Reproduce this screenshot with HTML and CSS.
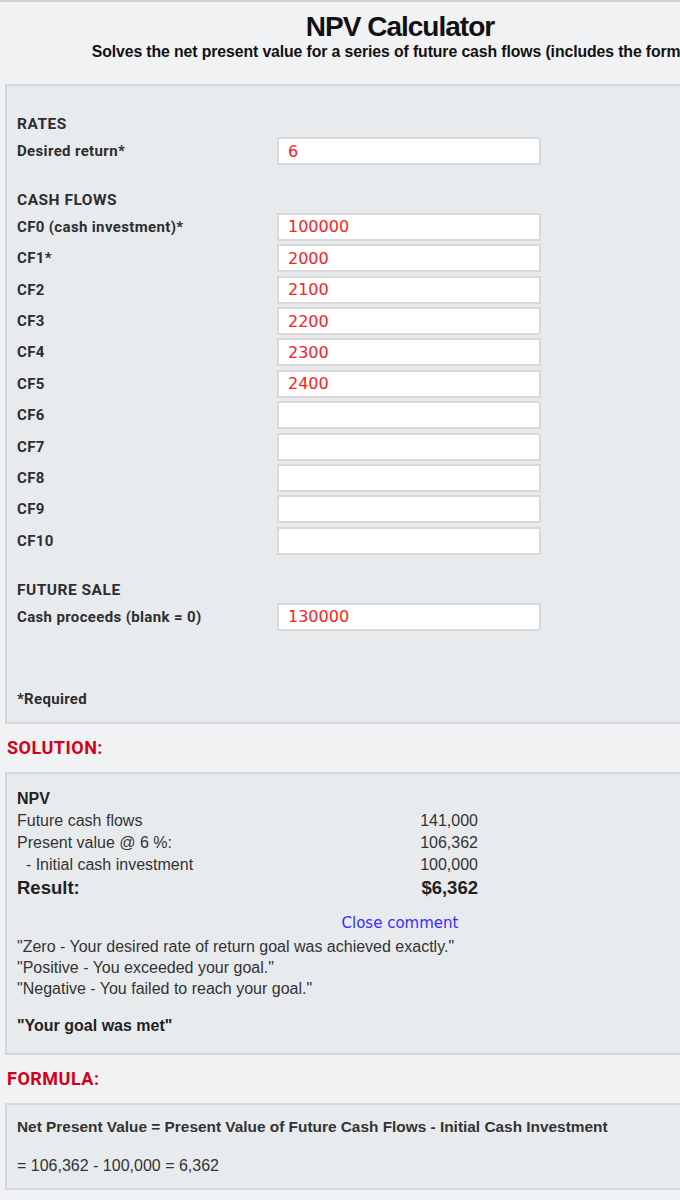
FILE: index.html
```html
<!DOCTYPE html>
<html lang="en">
<head>
<meta charset="utf-8">
<title>NPV Calculator</title>
<link rel="stylesheet" href="styles.css">
</head>
<body>
<div class="page">
  <header class="head">
    <h1 class="title">NPV Calculator</h1>
    <p class="subtitle">Solves the net present value for a series of future cash flows (includes the formula)</p>
  </header>

  <form class="panel inputs-panel">
    <h3 class="group">RATES</h3>
    <div class="row"><label class="lbl">Desired return*</label><input class="field" type="text" value="6"></div>

    <h3 class="group gap">CASH FLOWS</h3>
    <div class="row"><label class="lbl">CF0 (cash investment)*</label><input class="field" type="text" value="100000"></div>
    <div class="row"><label class="lbl">CF1*</label><input class="field" type="text" value="2000"></div>
    <div class="row"><label class="lbl">CF2</label><input class="field" type="text" value="2100"></div>
    <div class="row"><label class="lbl">CF3</label><input class="field" type="text" value="2200"></div>
    <div class="row"><label class="lbl">CF4</label><input class="field" type="text" value="2300"></div>
    <div class="row"><label class="lbl">CF5</label><input class="field" type="text" value="2400"></div>
    <div class="row"><label class="lbl">CF6</label><input class="field" type="text" value=""></div>
    <div class="row"><label class="lbl">CF7</label><input class="field" type="text" value=""></div>
    <div class="row"><label class="lbl">CF8</label><input class="field" type="text" value=""></div>
    <div class="row"><label class="lbl">CF9</label><input class="field" type="text" value=""></div>
    <div class="row"><label class="lbl">CF10</label><input class="field" type="text" value=""></div>

    <h3 class="group gap">FUTURE SALE</h3>
    <div class="row"><label class="lbl">Cash proceeds (blank = 0)</label><input class="field" type="text" value="130000"></div>

    <p class="required">*Required</p>
  </form>

  <h2 class="section">SOLUTION:</h2>
  <div class="panel result-panel">
    <div class="calc">
      <div class="c-head">NPV</div>
      <div class="c-lbl">Future cash flows</div><div class="c-val">141,000</div>
      <div class="c-lbl">Present value @ 6 %:</div><div class="c-val">106,362</div>
      <div class="c-lbl">&nbsp; - Initial cash investment</div><div class="c-val">100,000</div>
      <div class="c-lbl c-big">Result:</div><div class="c-val c-big">$6,362</div>
    </div>
    <div class="close"><a class="close-link" href="#">Close comment</a></div>
    <p class="quotes">"Zero - Your desired rate of return goal was achieved exactly."<br>"Positive - You exceeded your goal."<br>"Negative - You failed to reach your goal."</p>
    <p class="verdict">"Your goal was met"</p>
  </div>

  <h2 class="section">FORMULA:</h2>
  <div class="panel formula-panel">
    <p class="f-main">Net Present Value = Present Value of Future Cash Flows - Initial Cash Investment</p>
    <p class="f-calc">= 106,362 - 100,000 = 6,362</p>
  </div>
</div>
</body>
</html>
```

FILE: styles.css
```css
html, body {
  margin: 0;
  padding: 0;
}
body {
  background: #f1f2f4;
  border-top: 2px solid #cfd1d4;
  overflow: hidden;
  font-family: "Liberation Sans", Arial, sans-serif;
  color: #2a2a2a;
}
.page {
  width: 790px;
  margin-left: 5px;
}
.head {
  text-align: center;
  padding-top: 9px;
  height: 82px;
  box-sizing: border-box;
}
.title {
  margin: 0;
  font-size: 28px;
  line-height: 32px;
  font-weight: bold;
  color: #111;
  letter-spacing: -1px;
}
.subtitle {
  margin: 0;
  font-size: 15.8px;
  line-height: 18px;
  font-weight: bold;
  color: #111;
  letter-spacing: -0.1px;
}
.panel {
  background: #e8ebee;
  border: 2px solid #d5d7da;
  box-sizing: border-box;
}
.inputs-panel {
  margin: 0;
  padding: 28px 10px 13px;
  display: flex;
  flex-direction: column;
}
.group {
  margin: 0 0 3px;
  font-family: Roboto, "Liberation Sans", sans-serif;
  font-size: 15.5px;
  line-height: 20px;
  font-weight: bold;
  letter-spacing: 0.5px;
  color: #2e2e2e;
}
.group.gap {
  margin-top: 22px;
  margin-bottom: 2.5px;
}
.row {
  display: grid;
  grid-template-columns: 260px 264px;
  align-items: center;
  margin-bottom: 3.4px;
}
.lbl {
  font-family: Roboto, "Liberation Sans", sans-serif;
  font-size: 15px;
  font-weight: bold;
  letter-spacing: 0.35px;
  color: #2e2e2e;
}
.field {
  height: 28px;
  box-sizing: border-box;
  border: 2px solid #d9d9d9;
  background: #fff;
  padding: 0 0 0 9px;
  margin: 0;
  font-family: "DejaVu Sans", Verdana, sans-serif;
  font-size: 16px;
  color: #ff2020;
  outline: none;
}
.required {
  margin: 55px 0 0;
  font-family: Roboto, "Liberation Sans", sans-serif;
  font-size: 15px;
  line-height: 20px;
  font-weight: bold;
  letter-spacing: 0.3px;
  color: #2e2e2e;
}
.section {
  margin: 14px 0 14px 2px;
  font-family: Roboto, "Liberation Sans", sans-serif;
  font-size: 18px;
  line-height: 20px;
  font-weight: bold;
  letter-spacing: 0.5px;
  color: #d0021b;
}
.result-panel {
  padding: 14px 10px 17px;
}
.calc {
  display: grid;
  grid-template-columns: 360px 101px;
  font-family: "Liberation Sans", Arial, sans-serif;
  font-size: 16px;
  line-height: 22px;
  color: #333;
}
.c-head {
  grid-column: 1 / -1;
  font-weight: bold;
  color: #222;
}
.c-val {
  text-align: right;
}
.c-big {
  font-size: 18.5px;
  line-height: 23px;
  font-weight: bold;
  color: #222;
}
.close {
  text-align: center;
  margin-top: 13px;
  line-height: 22px;
}
.close-link {
  font-family: "DejaVu Sans", Verdana, sans-serif;
  font-size: 15px;
  color: #3a2cff;
  text-decoration: none;
}
.quotes {
  margin: 2px 0 0;
  font-size: 16px;
  line-height: 21px;
  color: #333;
}
.verdict {
  margin: 16px 0 0;
  font-size: 16px;
  line-height: 21px;
  font-weight: bold;
  color: #222;
}
.formula-panel {
  padding: 11px 10px 11px;
}
.f-main {
  margin: 0;
  font-size: 15.4px;
  line-height: 22px;
  font-weight: bold;
  color: #333;
}
.f-calc {
  margin: 17px 0 0;
  font-size: 16px;
  line-height: 22px;
  color: #333;
}
```
